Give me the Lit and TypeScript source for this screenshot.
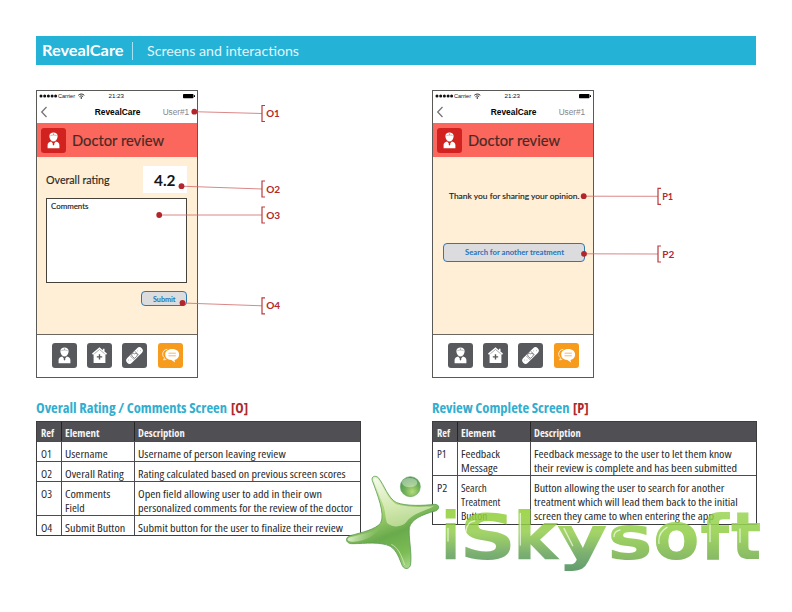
import { LitElement, html, svg, css } from "lit";
import { customElement, property } from "lit/decorators.js";

// One line of real text fitted to a given width.
const fit = (text: string, w: number, h: number, base: number, cls: string) => html`
  <svg class="fit ${cls}" width=${w} height=${h} role="presentation"><text x="0" y=${base} textLength=${w} lengthAdjust="spacingAndGlyphs">${text}</text></svg>`;

const doctor = svg`
  <path fill="#fff" d="M12.5 4.6c2.5 0 4.1 1.500 4.100 3.500 0 .9-.1 1.400-.4 2.100-.5 1.700-1.900 3.200-3.700 3.200s-3.200-1.500-3.700-3.200c-.3-.7-.4-1.200-.4-2.100 0-2 1.600-3.500 4.100-3.500z"/>
  <path fill="#fff" d="M6.600 20.300v-3.300c0-2 1.300-3.100 3.600-3.500l2.300 2.700 2.300-2.700c2.300.4 3.600 1.500 3.600 3.500v3.300z"/>
  <path class="cut" d="M9.300 7.700c2-.9 4.400-.9 6.400 0" fill="none" stroke-width=".4"/>
  <circle class="cutfill" cx="12.500" cy="6.100" r=".5"/>
  <path class="cutfill" d="M12.500 14.800l1 1.300-1 1.700-1-1.700z"/>`;
const home = svg`
  <path fill="#fff" d="M12.500 4.300L5 10.600l.9 1.100.7-.5V20h11.800v-8.800l.7.5.9-1.100-2.500-2V5.800h-1.600v1.500z"/>
  <path class="cut" d="M7.300 10.800l5.200-4.300 5.200 4.300" fill="none" stroke-width=".5"/>
  <path class="cutfill" d="M11.800 11.200h1.400v2h2v1.400h-2v2h-1.400v-2h-2v-1.400h2z"/>`;
const plaster = svg`
  <g transform="rotate(-45 12.500 12.500)">
    <rect x="2.200" y="9.200" width="20.600" height="6.600" rx="3.300" fill="#fff"/>
    <path class="cut" d="M9.200 9.200v6.600M15.800 9.200v6.600" stroke-width=".5"/>
    <g class="cutfill"><circle cx="5" cy="11.500" r=".35"/><circle cx="6.800" cy="13.200" r=".35"/><circle cx="18" cy="11.500" r=".35"/><circle cx="20" cy="13.300" r=".35"/></g>
  </g>
  <path class="cut" fill="none" stroke-width=".8" d="M12.500 15.300c-2-1.300-3-2.500-2.800-4 .3-1.500 2-1.600 2.800-.3.800-1.300 2.500-1.200 2.800.3.200 1.500-.8 2.700-2.800 4z"/>`;
const chat = svg`
  <path fill="none" stroke="#fff" stroke-width=".8" d="M9.300 6.300C6.300 6.500 4.500 8.600 4.700 11.300c.1 1.600.8 2.700 1.800 3.500l-.8 2.200 2.700-1"/>
  <path fill="#fff" d="M14.200 6.100c4.100 0 6.900 2.300 6.900 5.500 0 2.900-1.700 4.700-4.600 5.300l.6 2.700-3.700-2.500c-3.900-.2-6.200-2.400-6.200-5.500 0-3.200 2.900-5.500 7-5.500z"/>
  <path class="cut" d="M10.500 10.200h7.400M10.500 12.800h7.400" stroke-width=".7"/>`;

const tile = (shape: unknown, cls: string) => html`<svg class="tile ${cls}" viewBox="0 0 25 25">${shape}</svg>`;

@customElement("phone-frame")
class PhoneFrame extends LitElement {
  static styles = css`
    :host { display: flex; flex-direction: column; box-sizing: border-box; width: 162px; height: 287.500px; border: 1px solid #5b5956; background: #fff; }
    svg { display: block; flex: none; overflow: visible; }
    .top { height: 32px; }
    .band { height: 34px; background: #fb675c; display: flex; align-items: center; gap: 5.500px; padding-left: 4px; box-sizing: border-box; }
    .tile { width: 25px; height: 25px; border-radius: 3px; background: #58595d; --c: #58595d; }
    .red { background: #d1221f; --c: #d1221f; }
    .orange { background: #f79b1c; --c: #f79b1c; }
    .cut { stroke: var(--c); }
    .cutfill { fill: var(--c); }
    .body { flex: 1; background: #feefd6; border-bottom: 1px solid #6b675f; }
    .tabs { height: 41.500px; display: flex; align-items: center; gap: 10.200px; padding-left: 15px; }
    .doc { font: 400 15.500px Lato, sans-serif; fill: #4a2a25; stroke: #4a2a25; stroke-width: .2; }
    .carrier { font: 6px "Liberation Sans", sans-serif; fill: #111; }
    .name { font: bold 8.500px "Liberation Sans", sans-serif; }
    .user { font: 8.500px "Liberation Sans", sans-serif; fill: #85858a; }
  `;
  render() {
    return html`
      <svg class="top" width="160" height="32">
        <g fill="#111"><circle cx="4" cy="5" r="1.500"/><circle cx="7.700" cy="5" r="1.500"/><circle cx="11.400" cy="5" r="1.500"/><circle cx="15.100" cy="5" r="1.500"/><circle cx="18.600" cy="5" r="1.500"/></g>
        <text class="carrier" x="21" y="7" textLength="17" lengthAdjust="spacingAndGlyphs">Carrier</text>
        <g fill="none" stroke="#111" stroke-width=".9"><path d="M41.300 4.300c1.800-1.700 4.200-1.700 6 0M42.500 5.700c1.200-1 2.400-1 3.600 0"/></g>
        <circle cx="44.300" cy="7" r=".8"/>
        <text class="carrier" x="71.500" y="7" textLength="15.500" lengthAdjust="spacingAndGlyphs">21:23</text>
        <rect x="146" y="3" width="10.500" height="4.200" rx=".7"/><rect x="157" y="4.200" width="1" height="1.800"/>
        <path d="M9.500 16L4.700 21l4.800 5" fill="none" stroke="#77777a" stroke-width="1.300"/>
        <text class="name" x="57.800" y="24" textLength="45.500" lengthAdjust="spacingAndGlyphs">RevealCare</text>
        <text class="user" x="125.700" y="24" textLength="26.500" lengthAdjust="spacingAndGlyphs">User#1</text>
      </svg>
      <div class="band">${tile(doctor, "red")}${fit("Doctor review", 92, 34, 22.700, "doc")}</div>
      <div class="body"><slot></slot></div>
      <div class="tabs">${tile(doctor, "")}${tile(home, "")}${tile(plaster, "")}${tile(chat, "orange")}</div>`;
  }
}

type Line = [string, number];
interface Row { ref: Line; el: Line[]; desc: Line[]; h: number; lh: number }

@customElement("spec-table")
class SpecTable extends LitElement {
  @property({ attribute: false }) rows: Row[] = [];
  static styles = css`
    :host { display: block; width: 325px; box-sizing: border-box; border: 1px solid #3d3d40; }
    svg { display: block; overflow: visible; }
    .row { display: grid; grid-template-columns: 23.500px 73px 1fr; box-sizing: border-box; border-bottom: 1px solid #4c4c50; }
    .row:last-child { border-bottom: 0; }
    .row > div { padding: 4px 0 0 3.500px; border-left: 1px solid #4c4c50; box-sizing: border-box; }
    .row > div:first-child { border-left: 0; padding-left: 4px; }
    .head { height: 19.500px; background: #505054; }
    .head > div { border-color: #252528; padding-top: 3px; }
    .cell { font: 400 11.500px "Open Sans", sans-serif; font-stretch: 75%; fill: #29292b; }
    .hd { font: 700 10.800px "Open Sans", sans-serif; font-stretch: 75%; fill: #f4f4f4; }
  `;
  render() {
    const lines = (ls: Line[], lh: number) => ls.map(([s, w]) => fit(s, w, lh, 12, "cell"));
    return html`
      <div class="row head"><div>${fit("Ref", 13, 14, 11.500, "hd")}</div><div>${fit("Element", 34.500, 14, 11.500, "hd")}</div><div>${fit("Description", 46.700, 14, 11.500, "hd")}</div></div>
      ${this.rows.map(r => html`<div class="row" style="height:${r.h}px"><div>${lines([r.ref], r.lh)}</div><div>${lines(r.el, r.lh)}</div><div>${lines(r.desc, r.lh)}</div></div>`)}`;
  }
}

const rowsO: Row[] = [
  { ref: ["O1", 10.7], el: [["Username", 42.7]], desc: [["Username of person leaving review", 147.7]], h: 20, lh: 14.5 },
  { ref: ["O2", 11], el: [["Overall Rating", 58.7]], desc: [["Rating calculated based on previous screen scores", 207.7]], h: 20, lh: 14.5 },
  { ref: ["O3", 11], el: [["Comments", 45.3], ["Field", 19.7]], desc: [["Open field allowing user to add in their own", 184], ["personalized comments for the review of the doctor", 214.7]], h: 34.5, lh: 14.5 },
  { ref: ["O4", 11.3], el: [["Submit Button", 60.3]], desc: [["Submit button for the user to finalize their review", 205]], h: 19, lh: 14.5 },
];
const rowsP: Row[] = [
  { ref: ["P1", 9.5], el: [["Feedback", 39], ["Message", 36.7]], desc: [["Feedback message to the user to let them know", 197.7], ["their review is complete and has been submitted", 203]], h: 34.5, lh: 14.5 },
  { ref: ["P2", 10.3], el: [["Search", 25.7], ["Treatment", 39.3], ["Button", 26.3]], desc: [["Button allowing the user to search for another", 190.3], ["treatment which will lead them back to the initial", 203.7], ["screen they came to when entering the app", 180]], h: 47.5, lh: 14.2 },
];

// label, dot x, dot y, bracket x, bracket top, label width
const notes: [string, number, number, number, number, number][] = [
  ["O1", 194.3, 111.7, 262, 105.5, 13.5],
  ["O2", 181.5, 186.2, 262, 181, 14],
  ["O3", 159.2, 215, 262, 207, 14],
  ["O4", 182.5, 303, 262, 297.8, 14],
  ["P1", 583.7, 196.2, 658, 188.3, 11],
  ["P2", 584, 253.8, 658, 246, 12],
];

// watermark letters: glyph, x, baseline, width, size
const letters: [string, number, number, number, number][] = [
  ["i", 303, 282, 58, 197], ["S", 358, 281, 171, 186], ["k", 518, 282, 137, 200], ["y", 650, 281, 153, 178],
  ["s", 802, 281, 137, 180], ["o", 939, 283, 140, 196], ["f", 1080, 281, 88, 186], ["t", 1172, 282, 92, 200],
];

@customElement("app-root")
class AppRoot extends LitElement {
  static styles = css`
    :host { display: block; position: relative; width: 792px; height: 612px; overflow: hidden; background: #fff; }
    svg { display: block; overflow: visible; flex: none; }
    .page { padding: 36px 0 0 36px; }
    .bar { display: flex; align-items: center; width: 720px; height: 29px; background: #24b2d7; box-sizing: border-box; padding-left: 6px; }
    .brand { font: 700 16px Lato, sans-serif; fill: #fff; }
    .rule { width: 1px; height: 18px; margin: 0 14px 0 8.500px; background: #a8e2f0; }
    .sub { font: 400 14px Lato, sans-serif; fill: #e2f5fa; }
    .cols { display: flex; gap: 71px; padding-top: 25px; }
    .col { width: 325px; }
    .title { display: flex; gap: 3.500px; height: 22px; margin: 21.500px 0 0; }
    .blue { font: 700 14px "Open Sans", sans-serif; font-stretch: 75%; fill: #31aecf; }
    .refc { font: 700 14px "Open Sans", sans-serif; font-stretch: 75%; fill: #ae2a2c; }
    .rating { display: flex; justify-content: space-between; padding: 9px 10px 0 9px; }
    .label { font: 400 10.500px Lato, sans-serif; fill: #2c2924; stroke: #2c2924; stroke-width: .15; }
    .score { width: 44px; height: 27px; background: #fff; box-sizing: border-box; padding-left: 11px; }
    .num { font: 700 16px Lato, sans-serif; fill: #151515; }
    .comments { margin: 5px 10px 0 8.500px; height: 85px; box-sizing: border-box; border: 1px solid #46423a; background: #fff; padding-left: 4.500px; }
    .small { font: 400 8px Lato, sans-serif; fill: #222; stroke: #222; stroke-width: .15; }
    .btn { box-sizing: border-box; border: 1px solid #2f78ae; border-radius: 4px; background: #dcdcde; display: flex; justify-content: center; }
    .submit { width: 46px; height: 15.500px; margin: 7.500px 10px 0 auto; }
    .search { width: 142px; height: 19px; margin: 40px 0 0 10px; }
    .link { font: 700 7.700px Lato, sans-serif; fill: #2673ba; }
    .thanks { padding: 32px 0 0 16px; }
    .over { position: absolute; left: 0; top: 0; width: 792px; height: 612px; }
    .tag { font: 700 9.700px Lato, sans-serif; fill: #b3292c; }
    .glyph { font-family: "DejaVu Sans", sans-serif; font-weight: 700; }
  `;
  render() {
    return html`
      <div class="page">
        <div class="bar">${fit("RevealCare", 81.500, 29, 20, "brand")}<div class="rule"></div>${fit("Screens and interactions", 152, 29, 19.800, "sub")}</div>
        <div class="cols">
          <div class="col">
            <phone-frame>
              <div class="rating">${fit("Overall rating", 63.500, 27, 17.700, "label")}<div class="score">${fit("4.2", 21.500, 27, 19.500, "num")}</div></div>
              <div class="comments">${fit("Comments", 37.500, 14, 10.300, "small")}</div>
              <div class="btn submit">${fit("Submit", 22.500, 13, 9.500, "link")}</div>
            </phone-frame>
            <div class="title">${fit("Overall Rating / Comments Screen", 191, 20, 13.500, "blue")}${fit("[O]", 17, 20, 13.500, "refc")}</div>
            <spec-table .rows=${rowsO}></spec-table>
          </div>
          <div class="col">
            <phone-frame>
              <div class="thanks">${fit("Thank you for sharing your opinion.", 130.500, 14, 9.500, "small")}</div>
              <div class="btn search">${fit("Search for another treatment", 99, 17, 11, "link")}</div>
            </phone-frame>
            <div class="title">${fit("Review Complete Screen", 137.500, 20, 13.500, "blue")}${fit("[P]", 15.700, 20, 13.500, "refc")}</div>
            <spec-table .rows=${rowsP}></spec-table>
          </div>
        </div>
      </div>
      <svg class="over" viewBox="0 0 792 612">
        ${notes.map(([s, x, y, bx, by, w]) => svg`
          <line x1=${x} y1=${y} x2=${bx} y2=${by + 8} stroke="#cf6a68" stroke-width=".8"/>
          <circle cx=${x} cy=${y} r="2.900" fill="#b3252a"/>
          <path d="M${bx + 3} ${by}H${bx}V${by + 16}H${bx + 3}" fill="none" stroke="#bb3a3c" stroke-width="1.200"/>
          <text class="tag" x=${bx + 4.2} y=${by + 11.5} textLength=${w} lengthAdjust="spacingAndGlyphs">${s}</text>`)}
      </svg>
      <svg class="over" viewBox="0 0 792 612">
        <defs>
          <linearGradient id="word" gradientUnits="userSpaceOnUse" x1="0" y1="130" x2="0" y2="310">
            <stop offset="0" stop-color="#8fd02e" stop-opacity=".85"/><stop offset=".4" stop-color="#93cc4c" stop-opacity=".85"/><stop offset=".75" stop-color="#75ac6a" stop-opacity=".95"/><stop offset="1" stop-color="#659f70"/>
          </linearGradient>
          <linearGradient id="word2" gradientUnits="userSpaceOnUse" x1="0" y1="130" x2="0" y2="300">
            <stop offset="0" stop-color="#8fd040" stop-opacity=".75"/><stop offset=".45" stop-color="#9bd35a" stop-opacity=".95"/><stop offset="1" stop-color="#82b267"/>
          </linearGradient>
          <linearGradient id="man" gradientUnits="userSpaceOnUse" x1="90" y1="40" x2="200" y2="310">
            <stop offset="0" stop-color="#e3f3c5"/><stop offset=".35" stop-color="#a7d472"/><stop offset=".62" stop-color="#69aa4c"/><stop offset=".85" stop-color="#7dbd55"/><stop offset="1" stop-color="#a9d78b"/>
          </linearGradient>
          <linearGradient id="gloss" x1="0" y1="0" x2="0" y2="1">
            <stop offset="0" stop-color="#fff" stop-opacity=".65"/><stop offset="1" stop-color="#dcedb2" stop-opacity=".65"/>
          </linearGradient>
          <radialGradient id="ball" cx=".6" cy=".75" r=".75"><stop offset="0" stop-color="#b5db7b"/><stop offset=".5" stop-color="#70b257"/><stop offset="1" stop-color="#4f9354"/></radialGradient>
          <linearGradient id="left" x1="0" y1="0" x2="1" y2="0"><stop offset="0" stop-color="#e8f5d8" stop-opacity=".85"/><stop offset="1" stop-color="#a5d184" stop-opacity="0"/></linearGradient>
        </defs>
        <g transform="translate(340 465) scale(.33333)">
          ${letters.map(([c, x, y, w, s], i) => svg`<text class="glyph" x=${x} y=${y} font-size=${s} textLength=${w} lengthAdjust="spacingAndGlyphs" fill=${i < 4 ? "url(#word)" : "url(#word2)"}>${c}</text>`)}
          <g fill="none" stroke="#fff" stroke-opacity=".65" stroke-width="4" stroke-linecap="round">
            <path d="M324 190v38M541 145v95M672 190l26 52M957 235q-4-32 24-48M1110 180v50M1200 192v40M378 200q2-30 26-32M822 215q0-16 18-20"/>
          </g>
          <path fill="url(#man)" stroke="#5d9b57" stroke-width="2.500" d="M97 47C93 34 105 30 115 38C134 62 144 100 170 113C200 124 250 122 284 118C300 118 299 134 286 138C246 148 213 164 208 188C205 214 216 264 212 297C210 313 194 315 187 302C177 279 171 257 151 244C121 229 76 236 39 236C17 237 13 218 30 212C67 202 106 194 122 174C136 146 112 88 97 47z"/>
          <path fill="url(#gloss)" d="M101 48C99 39 107 36 114 43C131 65 142 103 169 118C203 128 250 126 282 124C250 139 213 149 199 171C186 187 158 189 141 174C134 154 138 141 128 116z"/>
          <path fill="url(#left)" d="M30 217C65 207 101 202 122 186C116 205 75 231 39 230C20 231 19 221 30 217z"/>
          <path fill="none" stroke="#dceec2" stroke-width="3" opacity=".7" d="M194 300C184 270 174 247 154 238"/>
          <circle cx="211" cy="65" r="30" fill="url(#ball)" stroke="#69a765" stroke-width="2"/>
          <ellipse cx="209" cy="53" rx="23" ry="14" fill="#fff" opacity=".4"/>
        </g>
      </svg>`;
  }
}
